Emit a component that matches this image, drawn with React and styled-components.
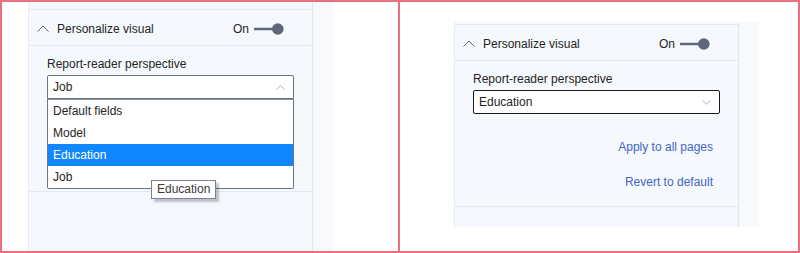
import React from 'react';
import styled, { createGlobalStyle } from 'styled-components';

const GlobalStyle = createGlobalStyle`
  html, body {
    margin: 0;
    padding: 0;
    background: #ffffff;
  }
  body {
    font-family: "Liberation Sans", Arial, sans-serif;
    font-size: 12px;
    color: #252423;
  }
`;

const Frame = styled.div`
  width: 800px;
  height: 253px;
  box-sizing: border-box;
  border: 2px solid #e8707f;
  display: flex;
  background: #ffffff;
  overflow: hidden;
`;

const Pane = styled.div`
  width: ${(p) => p.$width}px;
  flex-shrink: 0;
  box-sizing: border-box;
  padding: ${(p) => p.$top}px 0 0 ${(p) => p.$left}px;
  border-right: ${(p) => (p.$divider ? '2px solid #e8707f' : 'none')};
  display: flex;
  align-items: flex-start;
`;

const Panel = styled.div`
  display: flex;
  height: ${(p) => (p.$height ? `${p.$height}px` : '100%')};
`;

const Column = styled.div`
  width: 283px;
  background: #f5f8fc;
  border-left: 1px solid #e6ebf4;
  border-right: 1px solid #e1e7f2;
  display: flex;
  flex-direction: column;
`;

const Side = styled.div`
  width: 20px;
  background: #f7f9fc;
`;

const Lead = styled.div`
  height: ${(p) => p.$height}px;
  flex-shrink: 0;
`;

const Section = styled.section`
  border-top: 1px solid #e3e9f3;
  border-bottom: 1px solid #e3e9f3;
`;

const Header = styled.div`
  height: 36px;
  box-sizing: border-box;
  display: flex;
  align-items: center;
  padding: 2px 28px 0 8px;
  border-bottom: 1px solid #e3e9f3;
`;

const Title = styled.span`
  margin-left: 8px;
  flex: 1;
  font-size: 12px;
  color: #252423;
`;

const ToggleLabel = styled.span`
  font-size: 12px;
  margin-right: 5px;
`;

const Body = styled.div`
  height: 145px;
  padding: 10px 18px 0 18px;
  box-sizing: border-box;
  display: flex;
  flex-direction: column;
`;

const Label = styled.div`
  line-height: 16px;
  height: 16px;
`;

const Field = styled.div`
  position: relative;
  margin-top: 3px;
`;

const SelectBox = styled.div`
  height: 24px;
  box-sizing: border-box;
  border: 1px solid ${(p) => (p.$focused ? '#1b1a19' : '#6e7382')};
  border-radius: ${(p) => (p.$open ? '2px 2px 0 0' : '2px')};
  background: #ffffff;
  display: flex;
  align-items: center;
  padding: 0 8px 0 5px;
`;

const SelectValue = styled.span`
  flex: 1;
`;

const List = styled.ul`
  position: absolute;
  top: 100%;
  left: 0;
  right: 0;
  margin: 0;
  padding: 0;
  list-style: none;
  background: #ffffff;
  border: 1px solid #6e7382;
  border-top-color: #8a8f9c;
  border-radius: 0 0 2px 2px;
  z-index: 2;
`;

const Option = styled.li`
  height: 22px;
  line-height: 22px;
  padding-left: 5px;
  background: ${(p) => (p.$active ? '#1087ff' : 'transparent')};
  color: ${(p) => (p.$active ? '#ffffff' : '#252423')};
`;

const Tooltip = styled.div`
  position: absolute;
  left: 104px;
  top: 105px;
  height: 19px;
  line-height: 17px;
  box-sizing: border-box;
  padding: 0 5px;
  background: #ffffff;
  border: 1px solid #7b8192;
  box-shadow: 3px 3px 2px rgba(60, 64, 80, 0.3);
  color: #3b3a39;
  z-index: 3;
`;

const Links = styled.div`
  display: flex;
  flex-direction: column;
  align-items: flex-end;
  padding-right: 7px;
  margin-top: 25px;
  gap: 19px;
`;

const Link = styled.span`
  line-height: 16px;
  color: #4366c6;
`;

const HeaderChevron = () => (
  <svg width="12" height="7" viewBox="0 0 12 7">
    <path d="M0.5 6.5 L6 1 L11.5 6.5" fill="none" stroke="#5f6679" strokeWidth="1" />
  </svg>
);

const SelectChevron = ({ up }) => (
  <svg width="9" height="5" viewBox="0 0 9 5">
    <path
      d={up ? 'M0.5 4.5 L4.5 0.8 L8.5 4.5' : 'M0.5 0.5 L4.5 4.2 L8.5 0.5'}
      fill="none"
      stroke="#9fb0d4"
      strokeWidth="1"
    />
  </svg>
);

const Toggle = () => (
  <svg width="30" height="12" viewBox="0 0 30 12">
    <line x1="0" y1="6" x2="22" y2="6" stroke="#5f6679" strokeWidth="2.5" />
    <circle cx="23.8" cy="6" r="5.8" fill="#5f6679" />
  </svg>
);

const options = ['Default fields', 'Model', 'Education', 'Job'];

const PersonalizeCard = ({ value, open, focused, hovered, lead, height }) => (
  <Panel $height={height}>
    <Column>
      <Lead $height={lead} />
      <Section>
        <Header>
          <HeaderChevron />
          <Title>Personalize visual</Title>
          <ToggleLabel>On</ToggleLabel>
          <Toggle />
        </Header>
        <Body>
          <Label>Report-reader perspective</Label>
          <Field>
            <SelectBox $open={open} $focused={focused}>
              <SelectValue>{value}</SelectValue>
              <SelectChevron up={open} />
            </SelectBox>
            {open && (
              <List>
                {options.map((o) => (
                  <Option key={o} $active={o === hovered}>{o}</Option>
                ))}
              </List>
            )}
            {open && <Tooltip>{hovered}</Tooltip>}
          </Field>
          <Links>
            <Link>Apply to all pages</Link>
            <Link>Revert to default</Link>
          </Links>
        </Body>
      </Section>
    </Column>
    <Side />
  </Panel>
);

export default function App() {
  return (
    <>
      <GlobalStyle />
      <Frame>
        <Pane $width={398} $top={0} $left={26} $divider>
          <PersonalizeCard value="Job" open hovered="Education" lead={7} />
        </Pane>
        <Pane $width={398} $top={20} $left={54}>
          <PersonalizeCard value="Education" focused lead={2} height={205} />
        </Pane>
      </Frame>
    </>
  );
}
